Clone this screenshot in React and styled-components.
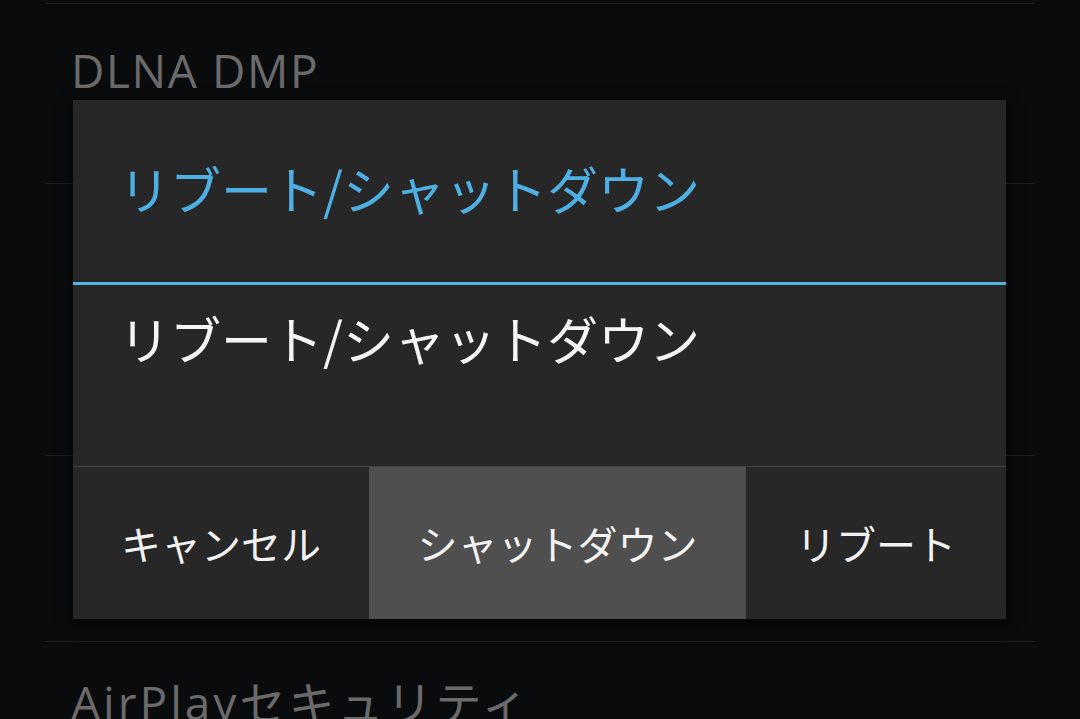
import React from "react";
import styled, { createGlobalStyle } from "styled-components";

const GlobalStyle = createGlobalStyle`
  html, body {
    margin: 0;
    padding: 0;
    background: #0a0b0d;
    overflow: hidden;
  }
  body {
    font-family: "Open Sans", "Noto Sans CJK JP", sans-serif;
  }
`;

const Screen = styled.div`
  position: relative;
  width: 1080px;
  height: 719px;
  background: #0a0b0d;
  overflow: hidden;
`;

const List = styled.div`
  display: flex;
  flex-direction: column;
  padding: 3px 45px 0 45px;
`;

const Row = styled.div`
  height: ${({ h }) => h}px;
  border-top: 1px solid #1d1e20;
  padding: ${({ pt }) => pt}px 0 0 26px;
  box-sizing: border-box;
`;

const RowTitle = styled.div`
  font-family: "Open Sans", "Noto Sans CJK JP", sans-serif;
  font-size: 46px;
  line-height: 56px;
  letter-spacing: ${({ spacing }) => spacing || 0}px;
  color: #6a6a6a;
  white-space: nowrap;
`;

const Dialog = styled.div`
  position: absolute;
  left: 73px;
  top: 100px;
  width: 933px;
  height: 519px;
  background: #272727;
  box-shadow: 0 4px 14px rgba(0, 0, 0, 0.7);
  display: flex;
  flex-direction: column;
  font-family: "Noto Sans CJK JP", sans-serif;
`;

const Title = styled.div`
  height: 182px;
  box-sizing: border-box;
  display: flex;
  align-items: center;
  padding: 0 0 6px 46px;
  font-size: 51px;
  color: #4eafe3;
  white-space: nowrap;
`;

const AccentLine = styled.div`
  height: 3px;
  background: #54b2e5;
`;

const Message = styled.div`
  height: 181px;
  box-sizing: border-box;
  padding: 23px 0 0 46px;
  font-size: 51px;
  line-height: 60px;
  color: #f4f4f4;
  white-space: nowrap;
`;

const ButtonBar = styled.div`
  flex: 1;
  display: flex;
  border-top: 1px solid #434343;
`;

const Button = styled.div`
  flex: 0 0 ${({ w }) => w}px;
  display: flex;
  align-items: center;
  justify-content: center;
  background: ${({ active }) => (active ? "#4f4f4f" : "transparent")};
  font-size: 40px;
  color: #f2f2f2;
  white-space: nowrap;
`;

const App = () => {
  return (
    <Screen>
      <GlobalStyle />
      <List>
        <Row h={180} pt={38}>
          <RowTitle spacing={1.6}>DLNA DMP</RowTitle>
        </Row>
        <Row h={272} pt={40} />
        <Row h={186} pt={40} />
        <Row h={120} pt={32}>
          <RowTitle spacing={3}>AirPlayセキュリティ</RowTitle>
        </Row>
      </List>
      <Dialog>
        <Title>リブート/シャットダウン</Title>
        <AccentLine />
        <Message>リブート/シャットダウン</Message>
        <ButtonBar>
          <Button w={296}>キャンセル</Button>
          <Button w={377} active>シャットダウン</Button>
          <Button w={260}>リブート</Button>
        </ButtonBar>
      </Dialog>
    </Screen>
  );
};

export default App;
